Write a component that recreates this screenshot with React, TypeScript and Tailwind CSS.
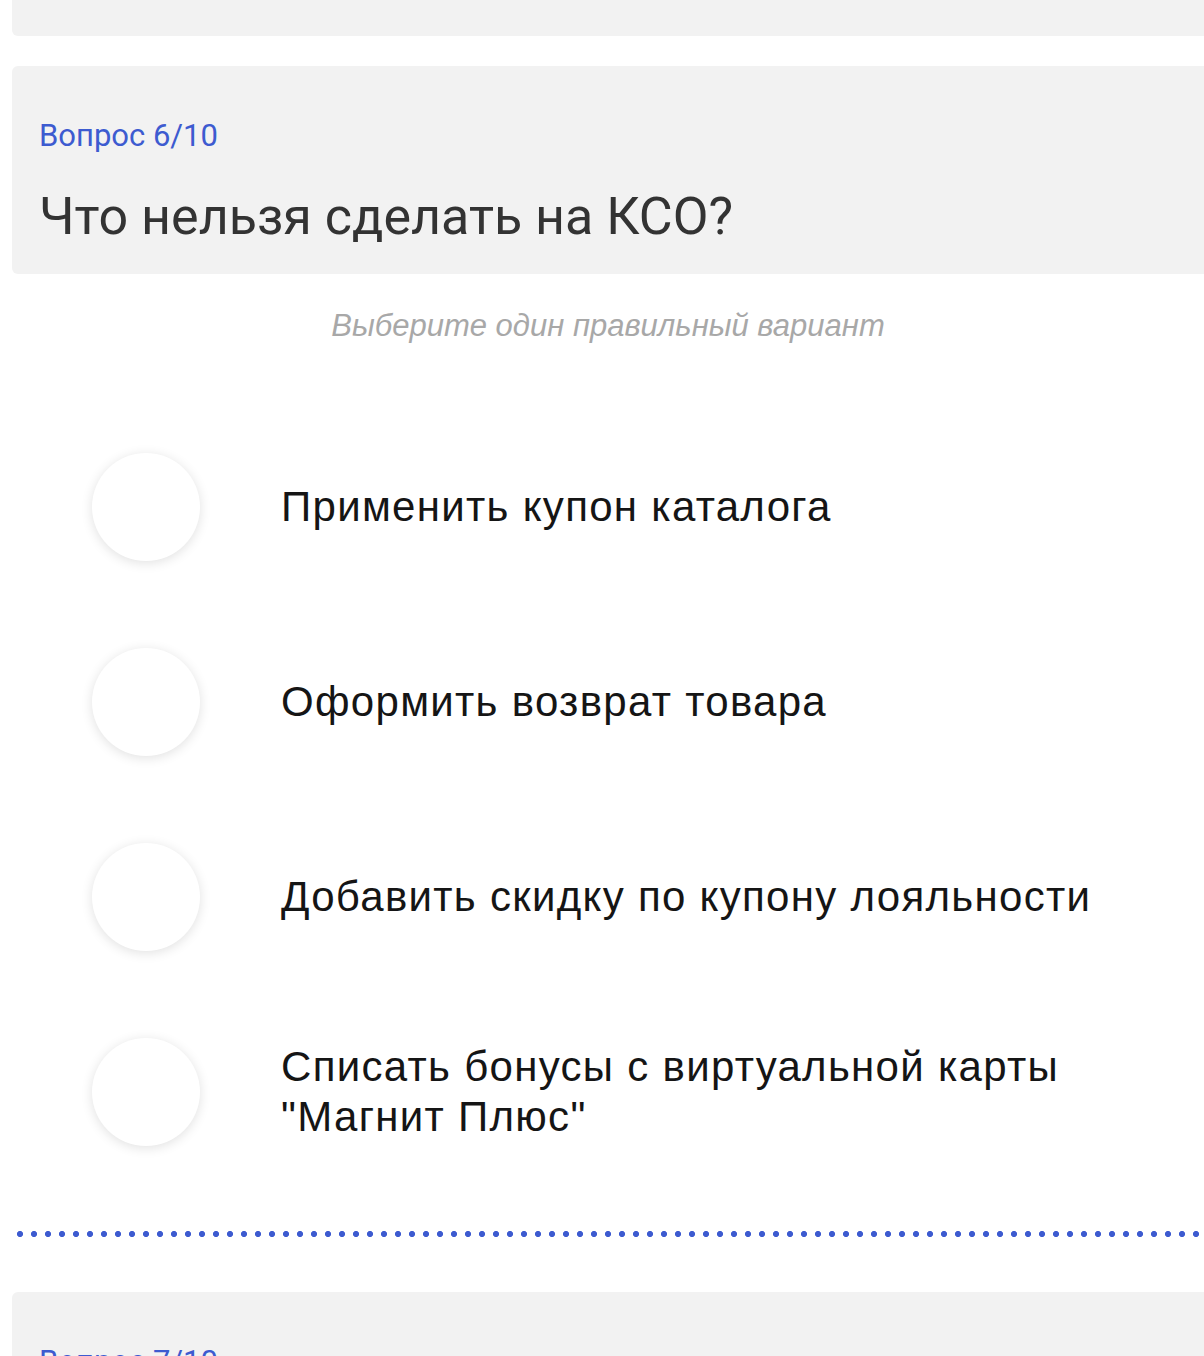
import React from "react"

const options = [
  "Применить купон каталога",
  "Оформить возврат товара",
  "Добавить скидку по купону лояльности",
  'Списать бонусы с виртуальной карты "Магнит Плюс"',
]

function RadioOption({ label }: { label: string }) {
  return (
    <div className="flex items-center">
      <div className="ml-[80px] h-[108px] w-[108px] shrink-0 rounded-full bg-white shadow-[0_2px_12px_rgba(0,0,0,0.12)]" />
      <div className="ml-[81px] max-w-[830px] font-['Liberation_Sans',Arial,sans-serif] text-[42px] leading-[50px] tracking-[1.3px] text-[#151515]">
        {label}
      </div>
    </div>
  )
}

export default function App() {
  return (
    <div className="min-h-[1356px] overflow-hidden bg-white pl-3 font-['Roboto',sans-serif]">
      {/* tail of previous question card */}
      <div className="-mr-4 h-[36px] rounded-b-md bg-[#f2f2f2]" />

      <div className="-mr-4 mt-[30px] rounded-md bg-[#f2f2f2] pb-[26px] pl-[27px] pt-[52px]">
        <div className="text-[31px] leading-[36px] text-[#3d5bd0]">Вопрос 6/10</div>
        <div className="mt-[32px] text-[52px] leading-[62px] text-[#333333]">Что нельзя сделать на КСО?</div>
      </div>

      <div className="mt-[35px] text-center font-['Liberation_Sans',Arial,sans-serif] text-[31px] italic leading-[34px] text-[#a8a8a8]">
        Выберите один правильный вариант
      </div>

      <div className="mt-[110px] flex flex-col gap-[87px]">
        {options.map((o) => (
          <RadioOption key={o} label={o} />
        ))}
      </div>

      <div className="mt-[85px] h-[6px] bg-[radial-gradient(circle,#3d5bd0_2.8px,transparent_3.2px)] bg-[length:14px_6px] bg-[position:1px_0]" />

      <div className="-mr-4 mt-[55px] h-[120px] rounded-md bg-[#f2f2f2] pl-[27px] pt-[52px]">
        <div className="text-[31px] leading-[36px] text-[#3d5bd0]">Вопрос 7/10</div>
      </div>
    </div>
  )
}
